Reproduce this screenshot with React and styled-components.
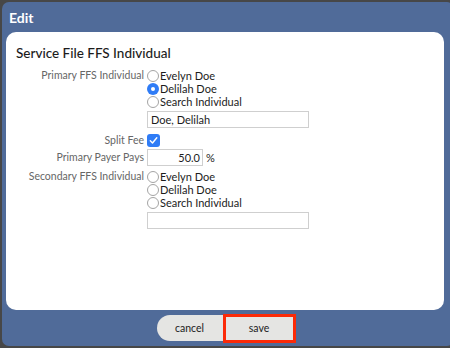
import React from 'react';
import styled, { createGlobalStyle } from 'styled-components';

const GlobalStyle = createGlobalStyle`
  html, body {
    margin: 0;
    padding: 0;
    background: #474747;
    overflow: hidden;
  }
  body {
    font-family: Lato, "Open Sans", sans-serif;
  }
`;

const Dialog = styled.div`
  margin: 2px 0 0 2px;
  width: 452px;
  height: 344px;
  background: #506b99;
  border-radius: 7px;
  display: flex;
  flex-direction: column;
`;

const Title = styled.div`
  height: 30px;
  padding-left: 7px;
  display: flex;
  align-items: center;
  color: #fff;
  font-size: 14px;
  font-weight: 700;
`;

const Card = styled.div`
  margin-left: 4px;
  width: 438px;
  height: 278px;
  box-sizing: border-box;
  background: #fff;
  border-radius: 10px;
  padding: 12px 10px 0;
`;

const Heading = styled.h2`
  margin: 0;
  font-size: 13.5px;
  line-height: 18px;
  font-weight: 500;
  color: #1c1c1c;
`;

const Form = styled.div`
  margin-top: 7px;
  display: flex;
  flex-direction: column;
`;

const Field = styled.div`
  display: flex;
  align-items: flex-start;
  margin-top: ${(p) => p.$top || 0}px;
`;

const Label = styled.div`
  width: 128px;
  text-align: right;
  padding-right: 3px;
  font-size: 10.5px;
  line-height: ${(p) => p.$lh || 13}px;
  color: #666;
  white-space: nowrap;
`;

const Controls = styled.div`
  display: flex;
  flex-direction: column;
`;

const Option = styled.div`
  display: flex;
  align-items: center;
  height: 13px;
  font-size: 11px;
  color: #1c1c1c;
`;

const Radio = styled.span`
  width: 12px;
  height: 12px;
  box-sizing: border-box;
  border-radius: 50%;
  margin-right: 1px;
  display: flex;
  align-items: center;
  justify-content: center;
  border: ${(p) => (p.$checked ? 'none' : '1px solid #a4a4a4')};
  background: ${(p) => (p.$checked ? '#2f7cf6' : '#fff')};

  &::after {
    content: '';
    display: ${(p) => (p.$checked ? 'block' : 'none')};
    width: 4px;
    height: 4px;
    border-radius: 50%;
    background: #fff;
  }
`;

const TextBox = styled.div`
  margin-top: ${(p) => p.$top || 0}px;
  width: ${(p) => p.$width}px;
  height: 17px;
  box-sizing: border-box;
  border: 1px solid #cfcfcf;
  font-size: 11px;
  line-height: 15px;
  color: #1c1c1c;
  padding: 0 ${(p) => (p.$right ? 2 : 3)}px;
  text-align: ${(p) => (p.$right ? 'right' : 'left')};
`;

const Inline = styled.div`
  display: flex;
  align-items: center;
  font-size: 11px;
  color: #1c1c1c;
  gap: 3px;
`;

const Check = styled.span`
  width: 13px;
  height: 13px;
  border-radius: 3px;
  background: #2f7cf6;
  display: flex;
  align-items: center;
  justify-content: center;
`;

const Buttons = styled.div`
  flex: 1;
  display: flex;
  align-items: center;
  justify-content: center;
  padding-right: 4px;
`;

const Button = styled.div`
  box-sizing: border-box;
  display: flex;
  align-items: center;
  justify-content: center;
  background: #e5e5e3;
  font-size: 10.5px;
  color: #222;
`;

const Cancel = styled(Button)`
  width: 66px;
  height: 26px;
  border-radius: 13px 0 0 13px;
`;

const Save = styled(Button)`
  width: 73px;
  height: 29px;
  border: 3px solid #fb2a08;
`;

const RadioGroup = ({ options, selected }) => (
  <>
    {options.map((o) => (
      <Option key={o}>
        <Radio $checked={o === selected} />
        {o}
      </Option>
    ))}
  </>
);

const names = ['Evelyn Doe', 'Delilah Doe', 'Search Individual'];

export default function App() {
  return (
    <>
      <GlobalStyle />
      <Dialog>
        <Title>Edit</Title>
        <Card>
          <Heading>Service File FFS Individual</Heading>
          <Form>
            <Field>
              <Label>Primary FFS Individual</Label>
              <Controls>
                <RadioGroup options={names} selected="Delilah Doe" />
                <TextBox $top={3} $width={162}>Doe, Delilah</TextBox>
              </Controls>
            </Field>
            <Field $top={6}>
              <Label>Split Fee</Label>
              <Check>
                <svg width="9" height="9" viewBox="0 0 9 9">
                  <path d="M1.3 4.8 L3.5 7 L7.8 1.8" fill="none" stroke="#fff" strokeWidth="1.4" strokeLinecap="round" strokeLinejoin="round" />
                </svg>
              </Check>
            </Field>
            <Field $top={2}>
              <Label $lh={17}>Primary Payer Pays</Label>
              <Inline>
                <TextBox $width={56} $right>50.0</TextBox>%
              </Inline>
            </Field>
            <Field $top={4}>
              <Label>Secondary FFS Individual</Label>
              <Controls>
                <RadioGroup options={names} />
                <TextBox $top={3} $width={162} />
              </Controls>
            </Field>
          </Form>
        </Card>
        <Buttons>
          <Cancel>cancel</Cancel>
          <Save>save</Save>
        </Buttons>
      </Dialog>
    </>
  );
}
